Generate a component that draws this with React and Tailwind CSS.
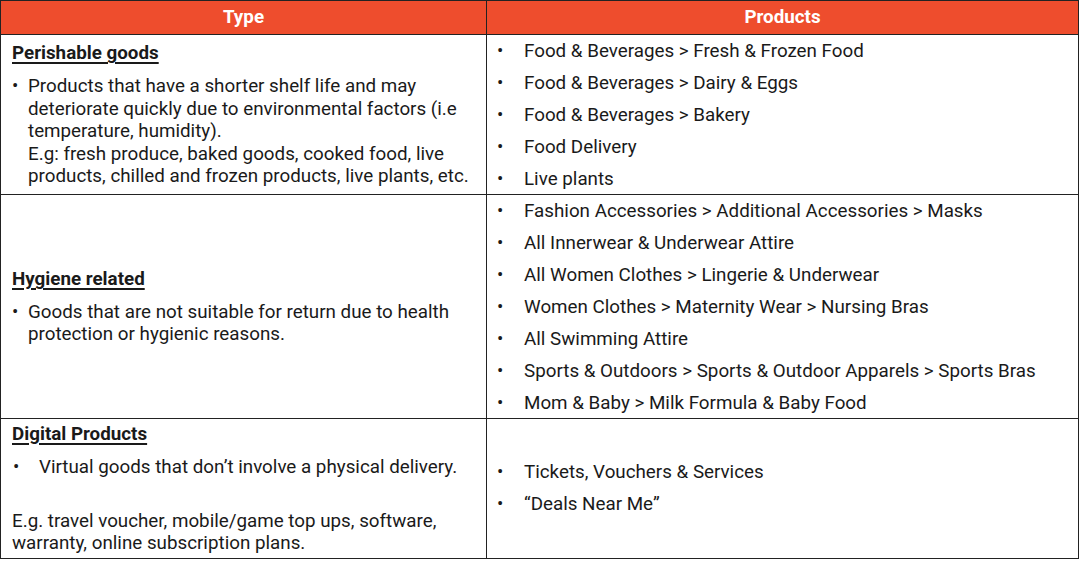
const rows = [
  {
    h: "h-[160px]",
    products: [
      "Food & Beverages > Fresh & Frozen Food",
      "Food & Beverages > Dairy & Eggs",
      "Food & Beverages > Bakery",
      "Food Delivery",
      "Live plants",
    ],
  },
  {
    h: "h-[224px]",
    products: [
      "Fashion Accessories > Additional Accessories > Masks",
      "All Innerwear & Underwear Attire",
      "All Women Clothes > Lingerie & Underwear",
      "Women Clothes > Maternity Wear > Nursing Bras",
      "All Swimming Attire",
      "Sports & Outdoors > Sports & Outdoor Apparels > Sports Bras",
      "Mom & Baby > Milk Formula & Baby Food",
    ],
  },
  {
    h: "h-[139px]",
    products: ["Tickets, Vouchers & Services", "\u201CDeals Near Me\u201D"],
  },
]

function ProductList({ items }) {
  return (
    <div className="flex flex-col pl-[10px]">
      {items.map((p, i) => (
        <div key={i} className="flex h-[32px] items-center">
          <span className="w-[27px] shrink-0">•</span>
          <span>{p}</span>
        </div>
      ))}
    </div>
  )
}

function Heading({ children }) {
  return <div className="font-bold underline underline-offset-[3px] decoration-[1.5px]">{children}</div>
}

export default function App() {
  return (
    <div className="bg-white min-h-[565px]">
      <div
        className="w-[1079px] border border-[#222] text-[18.8px] leading-[22.5px] text-[#1a1a1a]"
        style={{ fontFamily: "Roboto, 'Liberation Sans', sans-serif" }}
      >
        {/* header */}
        <div className="grid grid-cols-[486px_1fr] h-[34px] border-b border-[#222] bg-[#ee4d2d] text-white font-bold">
          <div className="flex items-center justify-center border-r border-[#222]">Type</div>
          <div className="flex items-center justify-center">Products</div>
        </div>

        {/* perishable */}
        <div className={`grid grid-cols-[486px_1fr] ${rows[0].h} border-b border-[#222]`}>
          <div className="flex flex-col justify-center pl-[11px] pr-1 border-r border-[#222]">
            <Heading>Perishable goods</Heading>
            <div className="flex mt-[10.5px]">
              <span className="w-[16px] shrink-0">•</span>
              <span>
                Products that have a shorter shelf life and may deteriorate quickly due to environmental factors (i.e
                temperature, humidity).
                <br />
                E.g: fresh produce, baked goods, cooked food, live products, chilled and frozen products, live plants, etc.
              </span>
            </div>
          </div>
          <div className="flex flex-col justify-center">
            <ProductList items={rows[0].products} />
          </div>
        </div>

        {/* hygiene */}
        <div className={`grid grid-cols-[486px_1fr] ${rows[1].h} border-b border-[#222]`}>
          <div className="flex flex-col justify-center pl-[11px] pr-1 border-r border-[#222]">
            <Heading>Hygiene related</Heading>
            <div className="flex mt-[10px]">
              <span className="w-[16px] shrink-0">•</span>
              <span>Goods that are not suitable for return due to health protection or hygienic reasons.</span>
            </div>
          </div>
          <div className="flex flex-col justify-center">
            <ProductList items={rows[1].products} />
          </div>
        </div>

        {/* digital */}
        <div className={`grid grid-cols-[486px_1fr] ${rows[2].h}`}>
          <div className="flex flex-col justify-center pl-[11px] pr-1 border-r border-[#222]">
            <Heading>Digital Products</Heading>
            <div className="flex mt-[10.5px]">
              <span className="w-[27px] shrink-0 pl-[1px]">•</span>
              <span>Virtual goods that don’t involve a physical delivery.</span>
            </div>
            <div className="mt-[31.5px]">
              E.g. travel voucher, mobile/game top ups, software, warranty, online subscription plans.
            </div>
          </div>
          <div className="flex flex-col justify-center">
            <ProductList items={rows[2].products} />
          </div>
        </div>
      </div>
    </div>
  )
}
